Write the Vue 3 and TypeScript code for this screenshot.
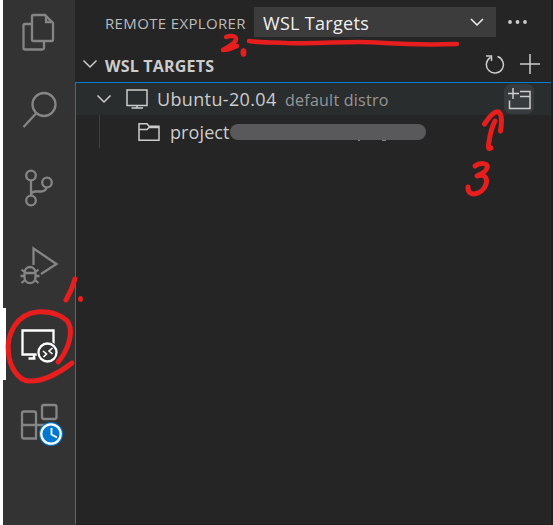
<script setup lang="ts">
import { ref } from 'vue'

interface Activity {
  id: string
  label: string
}

const activities: Activity[] = [
  { id: 'files', label: 'Explorer' },
  { id: 'search', label: 'Search' },
  { id: 'scm', label: 'Source Control' },
  { id: 'debug', label: 'Run and Debug' },
  { id: 'remote', label: 'Remote Explorer' },
  { id: 'extensions', label: 'Extensions' },
]
const active = ref('remote')
</script>

<template>
  <div class="window">
    <nav class="activity-bar">
      <button
        v-for="item in activities"
        :key="item.id"
        class="activity"
        :class="{ active: active === item.id }"
        :aria-label="item.label"
        @click="active = item.id"
      >
        <svg v-if="item.id === 'files'" class="glyph" viewBox="0 0 48 48">
          <path d="M20.500 7h11.500l8 8v16.500a1.500 1.500 0 0 1-1.500 1.500h-18a1.500 1.500 0 0 1-1.500-1.500v-23a1.500 1.500 0 0 1 1.500-1.500z M33 7v7h7 M19 16h-7a1.500 1.500 0 0 0-1.500 1.500v22.500a1.500 1.500 0 0 0 1.500 1.500h17.500a1.500 1.500 0 0 0 1.500-1.500v-6.500" />
        </svg>
        <svg v-else-if="item.id === 'search'" class="glyph" viewBox="0 0 48 48">
          <circle cx="31" cy="18.500" r="11.500" />
          <path d="M23 27.500L10.500 41" />
        </svg>
        <svg v-else-if="item.id === 'scm'" class="glyph" viewBox="0 0 48 48">
          <circle cx="18" cy="11.500" r="4.800" />
          <circle cx="34" cy="18.500" r="4.800" />
          <circle cx="18" cy="36.500" r="4.800" />
          <path d="M18 16.300v15.400c0-2.600 2-4.200 4.500-4.200h5.500c3 0 5-1.500 5.500-4.200" />
        </svg>
        <svg v-else-if="item.id === 'debug'" class="glyph" viewBox="0 0 48 48">
          <path d="M20.500 23v-16.500l23 15.500-15.500 10" />
          <path d="M11.500 31c0-8 11-8 11 0v4.500c0 7.500-11 7.500-11 0zM11.500 31h11M8.500 27.500l3.500 3M25.500 27.500l-3.500 3M7.500 34h4M22.500 34h4M8.500 41l3.500-3M25.500 41l-3.500-3" />
        </svg>
        <svg v-else-if="item.id === 'remote'" class="glyph" viewBox="0 0 48 48">
          <path d="M24 34.500H9.500v-24h31V24M15.500 38.500h7M21 35v4" />
          <circle cx="34.500" cy="32.500" r="11" class="cutout" />
          <circle cx="34.500" cy="32.500" r="9" />
          <path class="thin" d="M30 31l3.500 3-3 3M39.500 28l-3.500 3 3.500 3" />
        </svg>
        <svg v-else class="glyph" viewBox="0 0 48 48">
          <path d="M9 27.500V15.500a2 2 0 0 1 2-2H21a2 2 0 0 1 2 2v25H11a2 2 0 0 1-2-2V27H34" />
          <rect x="29" y="7" width="14.500" height="14" rx="2" />
          <circle cx="38" cy="36" r="12" class="badge" />
          <circle cx="38" cy="36" r="9.700" class="dial" />
          <path class="hands" d="M38.500 30v6.500l5.500 3" />
        </svg>
      </button>
    </nav>

    <main class="sidebar">
      <header class="titlebar">
        <h1 class="title">REMOTE EXPLORER</h1>
        <div class="select">
          <span class="select-label">WSL Targets</span>
          <svg class="chevron" viewBox="0 0 16 10"><path d="M2 2l6 6 6-6" /></svg>
        </div>
        <svg class="more" viewBox="0 0 20 6"><circle cx="2" cy="3" r="1.900" /><circle cx="9.500" cy="3" r="1.900" /><circle cx="17" cy="3" r="1.900" /></svg>
      </header>
      <section class="section-head">
        <svg class="chevron" viewBox="0 0 16 10"><path d="M1.500 1.500l6.500 6.500 6.500-6.500" /></svg>
        <h2 class="section-title">WSL TARGETS</h2>
        <svg class="refresh" viewBox="0 0 20 20"><path d="M12.500 2.500A8.500 8.500 0 1 1 5.500 3.300M1 2h5.500v5" /></svg>
        <svg class="add" viewBox="0 0 20 20"><path d="M10 0v20M0 10h20" /></svg>
      </section>
      <div class="tree">
        <div class="row selected">
          <svg class="chevron" viewBox="0 0 16 10"><path d="M1.500 1.500l6.500 6.500 6.500-6.500" /></svg>
          <svg class="monitor" viewBox="0 0 22 20"><path d="M1 1h20v15.500H1zM5.500 19h11.500M11 16.500v2.500" /></svg>
          <span class="distro">Ubuntu-20.04</span>
          <span class="description">default distro</span>
          <span class="new-window">
            <svg viewBox="0 0 24 22"><path d="M6 0v11M1 5.500h11M13 3.500h10v17H2.500V12.500M13 8.500h10" /></svg>
          </span>
        </div>
        <div class="row child">
          <span class="guide" />
          <svg class="folder" viewBox="0 0 22 18"><path d="M1 .7h8l2 2.500h10v14H1zM1 6.500h8l2-2h10" /></svg>
          <span class="project">project</span>
          <span class="redaction" />
        </div>
      </div>
    </main>

    <svg class="ink" viewBox="0 0 553 525" aria-hidden="true">
      <path d="M75 279c-2 7-5 14-9 21" />
      <path d="M58 362c9-10 14-25 12-35-2-11-19-16-33-15C17 314 6 334 8.500 353c1 13 9 27 20 28 14 1 31-8 43.500-18" />
      <path class="medium" d="M226 37c5-2 10-1 10 2 0 4-8 8-13 11 5 0 10-2 14-4" />
      <ellipse class="dot" cx="243.500" cy="52.500" rx="3" ry="4.200" />
      <ellipse class="dot" cx="80.500" cy="299" rx="2.500" ry="3" />
      <path class="medium" d="M249 41c12 2 24 1 38 2 30 1 48-1 72-1s43 4 98 2" />
      <path d="M491 148c-3 2-3-1-2-6 1-8 3-15 6-21M484.500 124c6-9 10-13 14-12 4 2 3 13 2 19" />
      <path d="M475 166c5-4 14-3 12 2-1 4-6 6-10 8 7-2 11 1 9 8-3 11-19 14-18 3" />
    </svg>
  </div>
</template>

<style>
body {
  margin: 0;
  background: #fff;
}
</style>

<style scoped>
.window {
  position: relative;
  box-sizing: border-box;
  display: flex;
  width: 553px;
  height: 525px;
  padding-left: 3px;
  overflow: hidden;
  background: #fff;
  color: #ccc;
  font-family: "Segoe UI", "Open Sans", "Noto Sans", sans-serif;
}
svg {
  display: block;
  flex: none;
  fill: none;
  stroke: currentColor;
}
.activity-bar {
  flex: 0 0 72px;
  height: 532px;
  margin-top: -7px;
  background: #333;
}
.activity {
  box-sizing: border-box;
  display: flex;
  align-items: center;
  width: 72px;
  height: 78px;
  padding: 0 0 0 10px;
  border: 0;
  background: none;
  color: #858585;
}
.activity.active {
  height: 72px;
  margin: 3px 0;
  border-left: 3px solid #fff;
  padding-left: 7px;
  color: #fff;
}
.glyph {
  width: 48px;
  height: 48px;
  overflow: visible;
  stroke-width: 2.3;
}
.cutout { fill: #333; stroke: none; }
.thin { stroke-width: 1.6; }
.badge { fill: #0078d0; stroke: none; }
.dial { stroke: #fff; stroke-width: 2.2; }
.hands { stroke: #fff; stroke-width: 1.8; }
.sidebar {
  box-sizing: border-box;
  flex: 1;
  min-width: 0;
  border-right: 2px solid #1e1e1e;
  background: #252526;
}
.titlebar {
  display: flex;
  align-items: center;
  height: 45px;
  padding-left: 30px;
}
.title {
  width: 149px;
  margin: 0;
  font-size: 15px;
  font-weight: 400;
  letter-spacing: .35px;
  color: #bbb;
  white-space: nowrap;
}
.select {
  box-sizing: border-box;
  display: flex;
  align-items: center;
  width: 242px;
  height: 30px;
  margin-top: -1px;
  padding: 0 11px 0 9px;
  background: #3c3c3c;
  color: #f0f0f0;
}
.select-label {
  flex: 1;
  padding-top: 2px;
  font-size: 18px;
  letter-spacing: .3px;
  white-space: nowrap;
}
.chevron {
  width: 16px;
  height: 10px;
  stroke-width: 1.5;
}
.more {
  width: 20px;
  height: 6px;
  margin: -1px 0 0 12px;
  fill: #ccc;
  stroke: none;
}
.section-head {
  display: flex;
  align-items: center;
  height: 37px;
  padding-left: 7px;
}
.section-title {
  flex: 1;
  margin: 4px 0 0 7px;
  font-size: 16px;
  font-weight: 700;
  letter-spacing: .2px;
}
.refresh, .add {
  width: 20px;
  height: 20px;
  margin-top: 1px;
  stroke-width: 1.5;
}
.add { margin-right: 11px; margin-left: 15px; }
.tree {
  box-sizing: border-box;
  height: 443px;
  border: 1px solid #007fd4;
  border-right: 0;
  border-bottom: 1px solid #1e1e1e;
}
.row {
  display: flex;
  align-items: center;
  height: 32px;
}
.selected {
  padding-left: 20px;
  background: #2a2d2e;
}
.monitor {
  width: 22px;
  height: 20px;
  margin-left: 14px;
  stroke-width: 1.5;
}
.distro, .project {
  font-size: 18px;
  white-space: nowrap;
}
.distro { width: 128px; margin-left: 9px; letter-spacing: .35px; }
.description {
  flex: 1;
  padding-top: 1px;
  font-size: 16px;
  letter-spacing: .25px;
  color: #969696;
  white-space: nowrap;
}
.new-window {
  display: flex;
  align-items: center;
  justify-content: center;
  width: 30px;
  height: 30px;
  margin-right: 17px;
  border-radius: 7px;
  background: #383b3d;
}
.new-window svg {
  width: 24px;
  height: 22px;
  stroke-width: 1.5;
}
.child { height: 33px; padding-left: 23px; }
.guide { width: 1px; height: 33px; background: #404040; }
.folder { width: 22px; height: 18px; margin-left: 38px; stroke-width: 1.5; }
.project { width: 60px; margin-left: 10px; letter-spacing: .1px; }
.redaction {
  position: relative;
  width: 196px;
  height: 16px;
  border-radius: 8px;
  background: #59595b;
}
.redaction::before,
.redaction::after {
  position: absolute;
  top: 16px;
  height: 1.5px;
  background: #858585;
  content: "";
}
.redaction::before { left: 128px; width: 2px; }
.redaction::after { left: 152px; width: 4px; }
.ink {
  position: absolute;
  inset: 0;
  width: 553px;
  height: 525px;
  stroke: #e61e1e;
  stroke-width: 5;
  stroke-linecap: round;
  stroke-linejoin: round;
  pointer-events: none;
}
.medium { stroke-width: 4.5; }
.dot { fill: #e61e1e; stroke: none; }
</style>
